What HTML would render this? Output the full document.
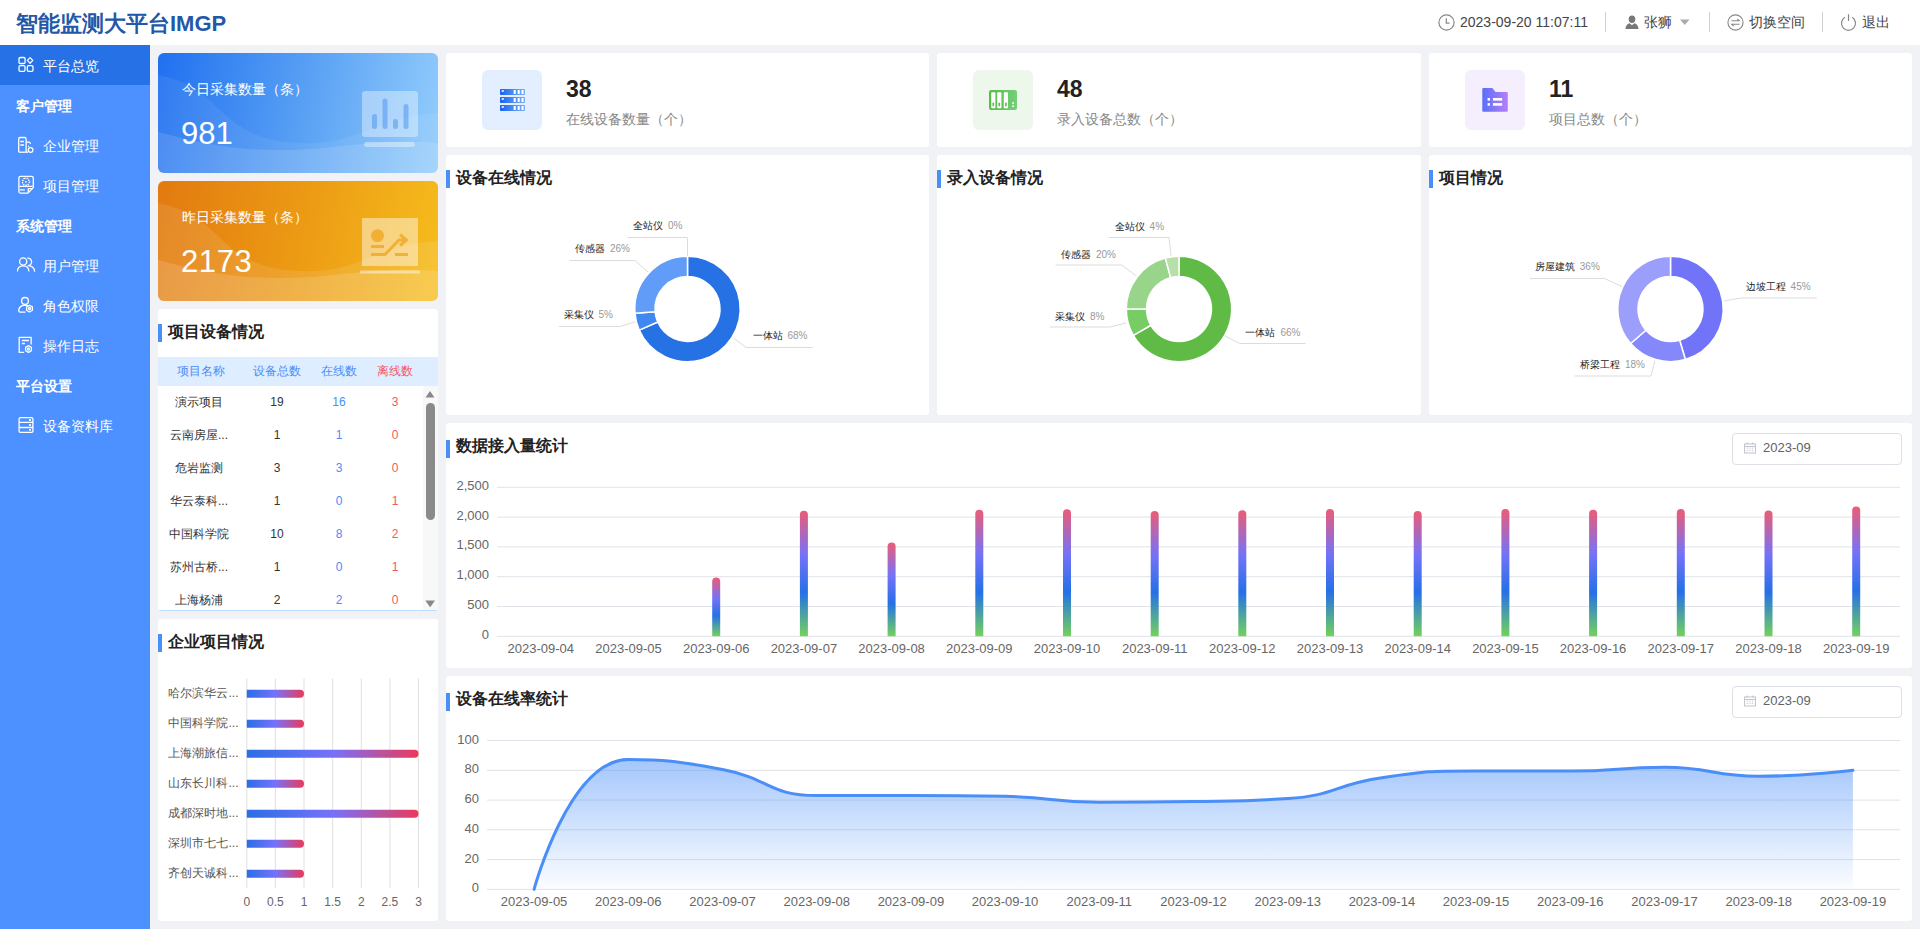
<!DOCTYPE html><html><head><meta charset="utf-8"><title>IMGP</title>
<style>
*{box-sizing:border-box;margin:0;padding:0}
html,body{width:1920px;height:929px;overflow:hidden}
body{background:#f0f2f5;font-family:'Liberation Sans', sans-serif;position:relative;color:#333}
.abs{position:absolute}
.card{position:absolute;background:#fff;border-radius:3px;overflow:hidden}
.ttl{position:absolute;font-size:16px;font-weight:bold;color:#222;line-height:18px;white-space:nowrap}
.bar4{position:absolute;width:4px;height:18px;background:#4a8ef8}
.nav{position:absolute;left:0;width:150px;height:40px;color:#fff;font-size:14px;line-height:40px;white-space:nowrap}
.nav svg{position:absolute;left:17px;top:12px}
.nav span{position:absolute;left:43px;top:0}
.grp{position:absolute;left:16px;color:#fff;font-size:14px;font-weight:bold;line-height:40px;white-space:nowrap}
.hd{position:absolute;top:0;height:45px;line-height:45px;font-size:14px;color:#444;white-space:nowrap}
.sep{position:absolute;top:12px;width:1px;height:20px;background:#d0d0d0}
</style></head><body>

<div class="abs" style="left:0;top:0;width:1920px;height:45px;background:#fff"></div>
<div class="hd" style="left:16px;top:1px;font-size:22px;font-weight:bold;color:#2358a8;letter-spacing:0px">智能监测大平台IMGP</div>
<svg class="abs" style="left:1438px;top:14px" width="17" height="17" viewBox="0 0 17 17"><circle cx="8.5" cy="8.5" r="7.6" fill="none" stroke="#888" stroke-width="1.2"/><path d="M8.3 4.2V9.2H11.6" fill="none" stroke="#888" stroke-width="1.2"/></svg>
<div class="hd" style="left:1460px">2023-09-20 11:07:11</div>
<div class="sep" style="left:1605px"></div>
<svg class="abs" style="left:1625px;top:15px" width="14" height="14" viewBox="0 0 14 14"><ellipse cx="7" cy="4.3" rx="3.3" ry="3.8" fill="#777"/><path d="M0.5 14C0.8 10 3 8.6 4.6 8.3L7 10.2L9.4 8.3C11 8.6 13.2 10 13.5 14Z" fill="#777"/></svg>
<div class="hd" style="left:1644px">张狮</div>
<svg class="abs" style="left:1680px;top:19px" width="10" height="7" viewBox="0 0 10 7"><path d="M0 0.5H9.5L4.75 6Z" fill="#aaa"/></svg>
<div class="sep" style="left:1709px"></div>
<svg class="abs" style="left:1727px;top:14px" width="17" height="17" viewBox="0 0 17 17"><circle cx="8.5" cy="8.5" r="7.6" fill="none" stroke="#888" stroke-width="1.1"/><path d="M4.5 6.8H12.3L10.3 4.8M12.5 10.2H4.7L6.7 12.2" fill="none" stroke="#888" stroke-width="1.1"/></svg>
<div class="hd" style="left:1749px">切换空间</div>
<div class="sep" style="left:1822px"></div>
<svg class="abs" style="left:1840px;top:13px" width="17" height="18" viewBox="0 0 17 18"><path d="M4.9 4.3A7 7 0 1 0 12.1 4.3" fill="none" stroke="#888" stroke-width="1.2"/><path d="M8.5 1.2V8" fill="none" stroke="#888" stroke-width="1.2"/></svg>
<div class="hd" style="left:1862px">退出</div>
<div class="abs" style="left:0;top:45px;width:150px;height:884px;background:#4d90ff"></div>
<div class="abs" style="left:0;top:45px;width:150px;height:40px;background:#2571e5"></div>
<div class="nav" style="top:45px"><svg width="40" height="40" viewBox="0 0 40 40" style="left:0;top:0"><rect x="19" y="12.5" width="6.1" height="6" rx="1.3" fill="none" stroke="#fff" stroke-width="1.3" stroke-linejoin="round"/><path d="M30.1 12.6L32.8 15.4L30.1 18.2L27.4 15.4Z" fill="none" stroke="#fff" stroke-width="1.3" stroke-linejoin="round"/><rect x="19" y="20.6" width="6" height="5.7" rx="1.3" fill="none" stroke="#fff" stroke-width="1.3" stroke-linejoin="round"/><rect x="27.3" y="20.6" width="5.7" height="5.7" rx="1.3" fill="none" stroke="#fff" stroke-width="1.3" stroke-linejoin="round"/></svg><span style="top:1px">平台总览</span></div>
<div class="grp" style="top:86px">客户管理</div>
<div class="nav" style="top:125px"><svg width="40" height="40" viewBox="0 0 40 40" style="left:0;top:0"><path d="M18.7 27V14Q18.7 12.5 20.2 12.5H24.6Q26.1 12.5 26.1 14V27" fill="none" stroke="#fff" stroke-width="1.3" stroke-linejoin="round"/><path d="M20.3 16.5H23.9M20.3 20H23.9" fill="none" stroke="#fff" stroke-width="1.3" stroke-linejoin="round"/><path d="M26.1 17.2H29.6L30.6 19" fill="none" stroke="#fff" stroke-width="1.3" stroke-linejoin="round"/><path d="M18.7 27.2H28" fill="none" stroke="#fff" stroke-width="1.3" stroke-linejoin="round"/><circle cx="30.6" cy="25" r="2.3" fill="none" stroke="#fff" stroke-width="1.3" stroke-linejoin="round"/><circle cx="28.6" cy="21.2" r="0.7" fill="#fff"/></svg><span style="top:1px">企业管理</span></div>
<div class="nav" style="top:165px"><svg width="40" height="40" viewBox="0 0 40 40" style="left:0;top:0"><path d="M28 28.1H20.4Q18.9 28.1 18.9 26.6V12.9Q18.9 11.4 20.4 11.4H31.8Q33.3 11.4 33.3 12.9V22.6L28 28.1" fill="none" stroke="#fff" stroke-width="1.3" stroke-linejoin="round"/><path d="M19.5 21.4H32.6M19.9 24.8H24.9" fill="none" stroke="#fff" stroke-width="1.3" stroke-linejoin="round"/><path d="M28.3 27.5V23.6H32.6" fill="none" stroke="#fff" stroke-width="1.3" stroke-linejoin="round"/><path d="M24 13.4H27.8L29.7 16.8L27.8 20.2H24L22.1 16.8Z" fill="none" stroke="#fff" stroke-width="1.3" stroke-linejoin="round" stroke-dasharray="1.6 0.9"/><circle cx="25.9" cy="16.8" r="0.9" fill="#fff"/></svg><span style="top:1px">项目管理</span></div>
<div class="grp" style="top:206px">系统管理</div>
<div class="nav" style="top:245px"><svg width="40" height="40" viewBox="0 0 40 40" style="left:0;top:0"><circle cx="23.2" cy="16.5" r="3.6" fill="none" stroke="#fff" stroke-width="1.3" stroke-linejoin="round"/><path d="M17.4 26.6Q17.6 20.9 23.2 20.9Q28.7 20.9 28.9 26.6" fill="none" stroke="#fff" stroke-width="1.3" stroke-linejoin="round"/><path d="M27.2 13.1A3.7 3.7 0 1 1 28.4 20.6Q34.4 21.4 34.7 26.6" fill="none" stroke="#fff" stroke-width="1.3" stroke-linejoin="round"/></svg><span style="top:1px">用户管理</span></div>
<div class="nav" style="top:285px"><svg width="40" height="40" viewBox="0 0 40 40" style="left:0;top:0"><circle cx="25" cy="15.9" r="3.4" fill="none" stroke="#fff" stroke-width="1.3" stroke-linejoin="round"/><path d="M28.4 20.9Q27 20.2 25 20.2Q18.9 20.5 18.7 25.8Q18.8 27.1 20.2 27.1H25.6" fill="none" stroke="#fff" stroke-width="1.3" stroke-linejoin="round"/><path d="M29.5 20.2L32.4 21.9V25.3L29.5 27L26.6 25.3V21.9Z" fill="none" stroke="#fff" stroke-width="1.3" stroke-linejoin="round"/><circle cx="29.5" cy="23.6" r="1.1" fill="none" stroke="#fff" stroke-width="1.3" stroke-linejoin="round"/></svg><span style="top:1px">角色权限</span></div>
<div class="nav" style="top:325px"><svg width="40" height="40" viewBox="0 0 40 40" style="left:0;top:0"><path d="M24.1 27.4H19.2V12.3H31.1V19.4" fill="none" stroke="#fff" stroke-width="1.3" stroke-linejoin="round"/><path d="M21.8 15.5H29M21.8 18.5H24.9" fill="none" stroke="#fff" stroke-width="1.3" stroke-linejoin="round"/><path d="M28.5 20.6L31.4 22.3V25.7L28.5 27.4L25.6 25.7V22.3Z" fill="none" stroke="#fff" stroke-width="1.3" stroke-linejoin="round"/><circle cx="28.5" cy="24" r="1.1" fill="none" stroke="#fff" stroke-width="1.3" stroke-linejoin="round"/></svg><span style="top:1px">操作日志</span></div>
<div class="grp" style="top:366px">平台设置</div>
<div class="nav" style="top:405px"><svg width="40" height="40" viewBox="0 0 40 40" style="left:0;top:0"><rect x="19.1" y="12.7" width="13.8" height="14.6" rx="1.2" fill="none" stroke="#fff" stroke-width="1.3" stroke-linejoin="round"/><path d="M19.1 17.4H32.9M19.1 22.5H32.9" fill="none" stroke="#fff" stroke-width="1.3" stroke-linejoin="round"/><rect x="29" y="14.1" width="1.9" height="1.8" fill="#fff"/><rect x="29" y="19.1" width="1.9" height="1.8" fill="#fff"/><rect x="29" y="24" width="1.9" height="1.8" fill="#fff"/></svg><span style="top:1px">设备资料库</span></div>
<div class="abs" style="left:158px;top:53px;width:280px;height:120px;border-radius:6px;overflow:hidden;background:linear-gradient(100deg,#2070f0 0%,#579ff4 50%,#93cdfc 100%)">
<svg class="abs" style="left:0;top:0" width="280" height="120" viewBox="0 0 280 120"><path d="M0 22C30 28 45 40 60 55C85 80 110 92 160 90C200 88 230 62 280 60V120H0Z" fill="rgba(255,255,255,0.07)"/><path d="M0 79C40 90 80 98 130 97C180 96 220 85 280 90V120H0Z" fill="rgba(255,255,255,0.12)"/></svg>
<div class="abs" style="left:24px;top:26px;font-size:14px;color:#fff;line-height:20px;white-space:nowrap">今日采集数量（条）</div>
<div class="abs" style="left:23px;top:63px;font-size:31px;color:#fff;line-height:36px;white-space:nowrap;letter-spacing:0px">981</div>
<svg class="abs" style="left:202px;top:36px" width="60" height="60" viewBox="0 0 60 60"><rect x="2" y="2" width="56" height="46" rx="3" fill="rgba(255,255,255,0.38)"/><rect x="4" y="53" width="51" height="5" rx="2.5" fill="rgba(255,255,255,0.38)"/><rect x="12" y="25" width="5" height="15" rx="2.5" fill="rgba(80,150,240,0.55)"/><rect x="22.5" y="9.5" width="5" height="30.5" rx="2.5" fill="rgba(80,150,240,0.55)"/><rect x="33" y="30" width="5" height="10" rx="2.5" fill="rgba(80,150,240,0.55)"/><rect x="43.5" y="15" width="5" height="25" rx="2.5" fill="rgba(80,150,240,0.55)"/></svg>
</div>
<div class="abs" style="left:158px;top:181px;width:280px;height:120px;border-radius:6px;overflow:hidden;background:linear-gradient(100deg,#e27a10 0%,#ec9a14 50%,#f6bd1d 100%)">
<svg class="abs" style="left:0;top:0" width="280" height="120" viewBox="0 0 280 120"><path d="M0 22C30 28 45 40 60 55C85 80 110 92 160 90C200 88 230 62 280 60V120H0Z" fill="rgba(255,255,255,0.10)"/><path d="M0 79C40 90 80 98 130 97C180 96 220 85 280 90V120H0Z" fill="rgba(255,255,255,0.14)"/></svg>
<div class="abs" style="left:24px;top:26px;font-size:14px;color:#fff;line-height:20px;white-space:nowrap">昨日采集数量（条）</div>
<div class="abs" style="left:23px;top:63px;font-size:31px;color:#fff;line-height:36px;white-space:nowrap;letter-spacing:0.6px">2173</div>
<svg class="abs" style="left:200px;top:35px" width="64" height="64" viewBox="0 0 64 64"><rect x="4" y="2" width="56" height="48" fill="rgba(255,255,255,0.45)"/><rect x="2" y="54.5" width="60" height="3" fill="rgba(255,255,255,0.45)"/><circle cx="19.5" cy="19.7" r="6.5" fill="rgba(240,170,40,0.85)"/><rect x="13" y="29" width="13" height="3" fill="rgba(240,170,40,0.85)"/><rect x="37" y="37" width="13" height="3" fill="rgba(240,170,40,0.85)"/><path d="M13 38.5H27L41 24H46" fill="none" stroke="rgba(240,170,40,0.85)" stroke-width="3"/><path d="M42 18.5L48.5 24L42 29.5" fill="none" stroke="rgba(240,170,40,0.85)" stroke-width="3"/></svg>
</div>
<div class="card" style="left:158px;top:309px;width:280px;height:302px">
<div class="bar4" style="left:0;top:15px"></div>
<div class="ttl" style="left:10px;top:14px">项目设备情况</div>
<div class="abs" style="left:0;top:48px;width:280px;height:29px;background:#deedff"></div>
<div class="abs" style="left:2.5px;top:48px;width:80px;text-align:center;font-size:12px;line-height:29px;color:#4a8ef8">项目名称</div>
<div class="abs" style="left:79px;top:48px;width:80px;text-align:center;font-size:12px;line-height:29px;color:#4a8ef8">设备总数</div>
<div class="abs" style="left:141px;top:48px;width:80px;text-align:center;font-size:12px;line-height:29px;color:#4a8ef8">在线数</div>
<div class="abs" style="left:197px;top:48px;width:80px;text-align:center;font-size:12px;line-height:29px;color:#f25a5f">离线数</div>
<div class="abs" style="left:-4px;top:78px;width:90px;text-align:center;font-size:12px;line-height:31px;color:#333">演示项目</div>
<div class="abs" style="left:74px;top:78px;width:90px;text-align:center;font-size:12px;line-height:31px;color:#333">19</div>
<div class="abs" style="left:136px;top:78px;width:90px;text-align:center;font-size:12px;line-height:31px;color:#4a8ef8">16</div>
<div class="abs" style="left:192px;top:78px;width:90px;text-align:center;font-size:12px;line-height:31px;color:#f25a5f">3</div>
<div class="abs" style="left:-4px;top:111px;width:90px;text-align:center;font-size:12px;line-height:31px;color:#333">云南房屋...</div>
<div class="abs" style="left:74px;top:111px;width:90px;text-align:center;font-size:12px;line-height:31px;color:#333">1</div>
<div class="abs" style="left:136px;top:111px;width:90px;text-align:center;font-size:12px;line-height:31px;color:#4a8ef8">1</div>
<div class="abs" style="left:192px;top:111px;width:90px;text-align:center;font-size:12px;line-height:31px;color:#f25a5f">0</div>
<div class="abs" style="left:-4px;top:144px;width:90px;text-align:center;font-size:12px;line-height:31px;color:#333">危岩监测</div>
<div class="abs" style="left:74px;top:144px;width:90px;text-align:center;font-size:12px;line-height:31px;color:#333">3</div>
<div class="abs" style="left:136px;top:144px;width:90px;text-align:center;font-size:12px;line-height:31px;color:#4a8ef8">3</div>
<div class="abs" style="left:192px;top:144px;width:90px;text-align:center;font-size:12px;line-height:31px;color:#f25a5f">0</div>
<div class="abs" style="left:-4px;top:177px;width:90px;text-align:center;font-size:12px;line-height:31px;color:#333">华云泰科...</div>
<div class="abs" style="left:74px;top:177px;width:90px;text-align:center;font-size:12px;line-height:31px;color:#333">1</div>
<div class="abs" style="left:136px;top:177px;width:90px;text-align:center;font-size:12px;line-height:31px;color:#4a8ef8">0</div>
<div class="abs" style="left:192px;top:177px;width:90px;text-align:center;font-size:12px;line-height:31px;color:#f25a5f">1</div>
<div class="abs" style="left:-4px;top:210px;width:90px;text-align:center;font-size:12px;line-height:31px;color:#333">中国科学院</div>
<div class="abs" style="left:74px;top:210px;width:90px;text-align:center;font-size:12px;line-height:31px;color:#333">10</div>
<div class="abs" style="left:136px;top:210px;width:90px;text-align:center;font-size:12px;line-height:31px;color:#4a8ef8">8</div>
<div class="abs" style="left:192px;top:210px;width:90px;text-align:center;font-size:12px;line-height:31px;color:#f25a5f">2</div>
<div class="abs" style="left:-4px;top:243px;width:90px;text-align:center;font-size:12px;line-height:31px;color:#333">苏州古桥...</div>
<div class="abs" style="left:74px;top:243px;width:90px;text-align:center;font-size:12px;line-height:31px;color:#333">1</div>
<div class="abs" style="left:136px;top:243px;width:90px;text-align:center;font-size:12px;line-height:31px;color:#4a8ef8">0</div>
<div class="abs" style="left:192px;top:243px;width:90px;text-align:center;font-size:12px;line-height:31px;color:#f25a5f">1</div>
<div class="abs" style="left:-4px;top:276px;width:90px;text-align:center;font-size:12px;line-height:31px;color:#333">上海杨浦</div>
<div class="abs" style="left:74px;top:276px;width:90px;text-align:center;font-size:12px;line-height:31px;color:#333">2</div>
<div class="abs" style="left:136px;top:276px;width:90px;text-align:center;font-size:12px;line-height:31px;color:#4a8ef8">2</div>
<div class="abs" style="left:192px;top:276px;width:90px;text-align:center;font-size:12px;line-height:31px;color:#f25a5f">0</div>
<div class="abs" style="left:265px;top:77px;width:15px;height:225px;background:#f8f8f8"></div>
<svg class="abs" style="left:267px;top:81px" width="10" height="8"><path d="M0.5 7.5H9.5L5 1Z" fill="#888"/></svg>
<div class="abs" style="left:268px;top:94px;width:9px;height:117px;border-radius:4.5px;background:#8a8a8a"></div>
<svg class="abs" style="left:267px;top:291px" width="11" height="8"><path d="M0.3 0.5H10L5.15 7.3Z" fill="#888"/></svg>
<div class="abs" style="left:0;top:301px;width:280px;height:1px;background:#bcdcff"></div>
</div>
<div class="card" style="left:158px;top:619px;width:280px;height:302px">
<div class="bar4" style="left:0;top:15px"></div>
<div class="ttl" style="left:10px;top:14px">企业项目情况</div>
<svg class="abs" style="left:0;top:0" width="280" height="302" viewBox="0 0 280 302"><defs><linearGradient id="hb" x1="0" y1="0" x2="1" y2="0"><stop offset="0" stop-color="#2a6fe6"/><stop offset="0.5" stop-color="#7771fa"/><stop offset="1" stop-color="#ea3a5a"/></linearGradient><linearGradient id="hb3" x1="0" y1="0" x2="1" y2="0"><stop offset="0" stop-color="#2a6fe6"/><stop offset="0.5" stop-color="#7771fa"/><stop offset="1" stop-color="#ea3a5a"/></linearGradient></defs><line x1="88.8" y1="59.5" x2="88.8" y2="269" stroke="#e0e0e0" stroke-width="1"/><text x="88.8" y="286.5" font-size="12" fill="#666" text-anchor="middle" font-family="Liberation Sans, sans-serif">0</text><line x1="117.4" y1="59.5" x2="117.4" y2="269" stroke="#e0e0e0" stroke-width="1"/><text x="117.4" y="286.5" font-size="12" fill="#666" text-anchor="middle" font-family="Liberation Sans, sans-serif">0.5</text><line x1="146.0" y1="59.5" x2="146.0" y2="269" stroke="#e0e0e0" stroke-width="1"/><text x="146.0" y="286.5" font-size="12" fill="#666" text-anchor="middle" font-family="Liberation Sans, sans-serif">1</text><line x1="174.6" y1="59.5" x2="174.6" y2="269" stroke="#e0e0e0" stroke-width="1"/><text x="174.6" y="286.5" font-size="12" fill="#666" text-anchor="middle" font-family="Liberation Sans, sans-serif">1.5</text><line x1="203.3" y1="59.5" x2="203.3" y2="269" stroke="#e0e0e0" stroke-width="1"/><text x="203.3" y="286.5" font-size="12" fill="#666" text-anchor="middle" font-family="Liberation Sans, sans-serif">2</text><line x1="231.9" y1="59.5" x2="231.9" y2="269" stroke="#e0e0e0" stroke-width="1"/><text x="231.9" y="286.5" font-size="12" fill="#666" text-anchor="middle" font-family="Liberation Sans, sans-serif">2.5</text><line x1="260.5" y1="59.5" x2="260.5" y2="269" stroke="#e0e0e0" stroke-width="1"/><text x="260.5" y="286.5" font-size="12" fill="#666" text-anchor="middle" font-family="Liberation Sans, sans-serif">3</text><text x="80.5" y="78.0" font-size="12" fill="#555" text-anchor="end" font-family="Liberation Sans, sans-serif">哈尔滨华云...</text><path d="M88.8 70.8H142.0A4 4 0 0 1 142.0 78.8H88.8Z" fill="url(#hb)"/><text x="80.5" y="108.0" font-size="12" fill="#555" text-anchor="end" font-family="Liberation Sans, sans-serif">中国科学院...</text><path d="M88.8 100.8H142.0A4 4 0 0 1 142.0 108.8H88.8Z" fill="url(#hb)"/><text x="80.5" y="138.0" font-size="12" fill="#555" text-anchor="end" font-family="Liberation Sans, sans-serif">上海潮旅信...</text><path d="M88.8 130.8H256.5A4 4 0 0 1 256.5 138.8H88.8Z" fill="url(#hb)"/><text x="80.5" y="168.0" font-size="12" fill="#555" text-anchor="end" font-family="Liberation Sans, sans-serif">山东长川科...</text><path d="M88.8 160.8H142.0A4 4 0 0 1 142.0 168.8H88.8Z" fill="url(#hb)"/><text x="80.5" y="198.0" font-size="12" fill="#555" text-anchor="end" font-family="Liberation Sans, sans-serif">成都深时地...</text><path d="M88.8 190.8H256.5A4 4 0 0 1 256.5 198.8H88.8Z" fill="url(#hb)"/><text x="80.5" y="228.0" font-size="12" fill="#555" text-anchor="end" font-family="Liberation Sans, sans-serif">深圳市七七...</text><path d="M88.8 220.8H142.0A4 4 0 0 1 142.0 228.8H88.8Z" fill="url(#hb)"/><text x="80.5" y="258.0" font-size="12" fill="#555" text-anchor="end" font-family="Liberation Sans, sans-serif">齐创天诚科...</text><path d="M88.8 250.8H142.0A4 4 0 0 1 142.0 258.8H88.8Z" fill="url(#hb)"/></svg>
</div>
<div class="card" style="left:446px;top:53px;width:483px;height:94px">
<div class="abs" style="left:36px;top:17px;width:60px;height:60px;border-radius:6px;background:#e3eefe"></div>
<svg class="abs" style="left:36px;top:17px" width="60" height="60" viewBox="0 0 60 60"><defs><linearGradient id="sg1" x1="0" y1="0" x2="1" y2="0"><stop offset="0" stop-color="#1a62ee"/><stop offset="1" stop-color="#78b2f9"/></linearGradient></defs><rect x="18" y="19" width="25" height="6" rx="0.8" fill="url(#sg1)"/><rect x="19.7" y="20.2" width="2.1" height="1.6" fill="#fff"/><rect x="31.7" y="20" width="2" height="4" fill="#fff"/><rect x="35.7" y="20" width="2" height="4" fill="#fff"/><rect x="39.5" y="20" width="2" height="4" fill="#fff"/><rect x="18" y="27" width="25" height="6" rx="0.8" fill="url(#sg1)"/><rect x="19.7" y="28.2" width="2.1" height="1.6" fill="#fff"/><rect x="31.7" y="28" width="2" height="4" fill="#fff"/><rect x="35.7" y="28" width="2" height="4" fill="#fff"/><rect x="39.5" y="28" width="2" height="4" fill="#fff"/><rect x="18" y="35" width="25" height="6" rx="0.8" fill="url(#sg1)"/><rect x="19.7" y="36.2" width="2.1" height="1.6" fill="#fff"/><rect x="31.7" y="36" width="2" height="4" fill="#fff"/><rect x="35.7" y="36" width="2" height="4" fill="#fff"/><rect x="39.5" y="36" width="2" height="4" fill="#fff"/></svg>
<div class="abs" style="left:120px;top:23px;font-size:23px;font-weight:bold;color:#222;line-height:26px">38</div>
<div class="abs" style="left:120px;top:56px;font-size:14px;color:#888;line-height:20px;white-space:nowrap">在线设备数量（个）</div>
</div>
<div class="card" style="left:937px;top:53px;width:484px;height:94px">
<div class="abs" style="left:36px;top:17px;width:60px;height:60px;border-radius:6px;background:#edf7ec"></div>
<svg class="abs" style="left:36px;top:17px" width="60" height="60" viewBox="0 0 60 60"><defs><linearGradient id="sg2" x1="0" y1="0" x2="1" y2="0"><stop offset="0" stop-color="#56bd47"/><stop offset="1" stop-color="#74cf7b"/></linearGradient></defs><rect x="16" y="20" width="28" height="20" rx="2.2" fill="url(#sg2)"/><rect x="18.2" y="22.2" width="4.2" height="16" rx="0.8" fill="#fff"/><rect x="19.5" y="32.5" width="1.6" height="4" rx="0.8" fill="#5cbf50"/><rect x="24.2" y="22.2" width="4.2" height="16" rx="0.8" fill="#fff"/><rect x="25.5" y="32.5" width="1.6" height="4" rx="0.8" fill="#5cbf50"/><rect x="30.8" y="22.2" width="4.2" height="16" rx="0.8" fill="#fff"/><rect x="32.1" y="32.5" width="1.6" height="4" rx="0.8" fill="#5cbf50"/><rect x="39.2" y="32.3" width="1.8" height="1.5" fill="#fff"/><rect x="39.2" y="35.5" width="1.8" height="1.5" fill="#fff"/></svg>
<div class="abs" style="left:120px;top:23px;font-size:23px;font-weight:bold;color:#222;line-height:26px">48</div>
<div class="abs" style="left:120px;top:56px;font-size:14px;color:#888;line-height:20px;white-space:nowrap">录入设备总数（个）</div>
</div>
<div class="card" style="left:1429px;top:53px;width:483px;height:94px">
<div class="abs" style="left:36px;top:17px;width:60px;height:60px;border-radius:6px;background:#f5effd"></div>
<svg class="abs" style="left:36px;top:17px" width="60" height="60" viewBox="0 0 60 60"><defs><linearGradient id="sg3" x1="0" y1="0" x2="1" y2="0"><stop offset="0" stop-color="#5870f8"/><stop offset="1" stop-color="#b87ef8"/></linearGradient></defs><path d="M18.5 18H27.4L30.5 22.1H41.8Q42.8 22.1 42.8 23.1V40.7Q42.8 41.7 41.8 41.7H18.3Q17.3 41.7 17.3 40.7V19Q17.3 18 18.5 18Z" fill="url(#sg3)"/><rect x="22.6" y="28" width="2.4" height="2.6" fill="#fff"/><rect x="22.6" y="33.1" width="2.4" height="2.6" fill="#fff"/><rect x="27.9" y="28" width="9.3" height="2.6" fill="#fff"/><rect x="27.9" y="33.1" width="9.3" height="2.6" fill="#fff"/></svg>
<div class="abs" style="left:120px;top:23px;font-size:23px;font-weight:bold;color:#222;line-height:26px">11</div>
<div class="abs" style="left:120px;top:56px;font-size:14px;color:#888;line-height:20px;white-space:nowrap">项目总数（个）</div>
</div>
<div class="card" style="left:446px;top:155px;width:483px;height:260px">
<div class="bar4" style="left:0;top:15px"></div>
<div class="ttl" style="left:10px;top:14px">设备在线情况</div>
</div>
<svg class="abs" style="left:446px;top:155px" width="483" height="260" viewBox="446 155 483 260"><path d="M687.50 256.30A52.7 52.7 0 1 1 639.24 330.17L657.74 322.06A32.5 32.5 0 1 0 687.50 276.50Z" fill="#2671e3" stroke="#fff" stroke-width="1.5" stroke-linejoin="round"/><path d="M639.24 330.17A52.7 52.7 0 0 1 634.98 313.35L655.11 311.68A32.5 32.5 0 0 0 657.74 322.06Z" fill="#3f87f1" stroke="#fff" stroke-width="1.5" stroke-linejoin="round"/><path d="M634.98 313.35A52.7 52.7 0 0 1 687.50 256.30L687.50 276.50A32.5 32.5 0 0 0 655.11 311.68Z" fill="#609cf8" stroke="#fff" stroke-width="1.5" stroke-linejoin="round"/><polyline points="687.5,256 687.5,237.5 627.5,237.5" fill="none" stroke="#dcdcdc" stroke-width="1"/><text x="633" y="229.0" font-size="10" font-family="Liberation Sans, sans-serif"><tspan fill="#222">全站仪</tspan><tspan fill="#999" dx="5">0%</tspan></text><polyline points="648,272 635,260.5 569.5,260.5" fill="none" stroke="#dcdcdc" stroke-width="1"/><text x="575" y="252.0" font-size="10" font-family="Liberation Sans, sans-serif"><tspan fill="#222">传感器</tspan><tspan fill="#999" dx="5">26%</tspan></text><polyline points="635,322 620,326.5 559,326.5" fill="none" stroke="#dcdcdc" stroke-width="1"/><text x="563.5" y="317.5" font-size="10" font-family="Liberation Sans, sans-serif"><tspan fill="#222">采集仪</tspan><tspan fill="#999" dx="5">5%</tspan></text><polyline points="733.6,338 746,347.5 812.7,347.5" fill="none" stroke="#dcdcdc" stroke-width="1"/><text x="752.5" y="338.5" font-size="10" font-family="Liberation Sans, sans-serif"><tspan fill="#222">一体站</tspan><tspan fill="#999" dx="5">68%</tspan></text></svg>
<div class="card" style="left:937px;top:155px;width:484px;height:260px">
<div class="bar4" style="left:0;top:15px"></div>
<div class="ttl" style="left:10px;top:14px">录入设备情况</div>
</div>
<svg class="abs" style="left:937px;top:155px" width="484" height="260" viewBox="937 155 484 260"><path d="M1179.00 256.30A52.7 52.7 0 1 1 1133.36 335.35L1150.85 325.25A32.5 32.5 0 1 0 1179.00 276.50Z" fill="#5fba46" stroke="#fff" stroke-width="1.5" stroke-linejoin="round"/><path d="M1133.36 335.35A52.7 52.7 0 0 1 1126.30 309.00L1146.50 309.00A32.5 32.5 0 0 0 1150.85 325.25Z" fill="#77cc63" stroke="#fff" stroke-width="1.5" stroke-linejoin="round"/><path d="M1126.30 309.00A52.7 52.7 0 0 1 1165.36 258.10L1170.59 277.61A32.5 32.5 0 0 0 1146.50 309.00Z" fill="#98d58a" stroke="#fff" stroke-width="1.5" stroke-linejoin="round"/><path d="M1165.36 258.10A52.7 52.7 0 0 1 1179.00 256.30L1179.00 276.50A32.5 32.5 0 0 0 1170.59 277.61Z" fill="#b8dfa9" stroke="#fff" stroke-width="1.5" stroke-linejoin="round"/><polyline points="1171,256 1169,237.5 1108.8,237.5" fill="none" stroke="#dcdcdc" stroke-width="1"/><text x="1114.6" y="230.0" font-size="10" font-family="Liberation Sans, sans-serif"><tspan fill="#222">全站仪</tspan><tspan fill="#999" dx="5">4%</tspan></text><polyline points="1135.8,275.6 1121.9,265 1055.6,265" fill="none" stroke="#dcdcdc" stroke-width="1"/><text x="1061" y="257.5" font-size="10" font-family="Liberation Sans, sans-serif"><tspan fill="#222">传感器</tspan><tspan fill="#999" dx="5">20%</tspan></text><polyline points="1126,323 1110,327 1049.8,327" fill="none" stroke="#dcdcdc" stroke-width="1"/><text x="1055" y="319.5" font-size="10" font-family="Liberation Sans, sans-serif"><tspan fill="#222">采集仪</tspan><tspan fill="#999" dx="5">8%</tspan></text><polyline points="1225,336 1239.6,343.5 1305.6,343.5" fill="none" stroke="#dcdcdc" stroke-width="1"/><text x="1245.4" y="336.0" font-size="10" font-family="Liberation Sans, sans-serif"><tspan fill="#222">一体站</tspan><tspan fill="#999" dx="5">66%</tspan></text></svg>
<div class="card" style="left:1429px;top:155px;width:483px;height:260px">
<div class="bar4" style="left:0;top:15px"></div>
<div class="ttl" style="left:10px;top:14px">项目情况</div>
</div>
<svg class="abs" style="left:1429px;top:155px" width="483" height="260" viewBox="1429 155 483 260"><path d="M1670.50 256.30A52.7 52.7 0 0 1 1685.35 359.57L1679.66 340.18A32.5 32.5 0 0 0 1670.50 276.50Z" fill="#7174f8" stroke="#fff" stroke-width="1.5" stroke-linejoin="round"/><path d="M1685.35 359.57A52.7 52.7 0 0 1 1630.67 343.51L1645.94 330.28A32.5 32.5 0 0 0 1679.66 340.18Z" fill="#8588fa" stroke="#fff" stroke-width="1.5" stroke-linejoin="round"/><path d="M1630.67 343.51A52.7 52.7 0 0 1 1670.50 256.30L1670.50 276.50A32.5 32.5 0 0 0 1645.94 330.28Z" fill="#9c9efc" stroke="#fff" stroke-width="1.5" stroke-linejoin="round"/><polyline points="1723.8,301 1741,298 1816.8,298" fill="none" stroke="#dcdcdc" stroke-width="1"/><text x="1745.6" y="289.5" font-size="10" font-family="Liberation Sans, sans-serif"><tspan fill="#222">边坡工程</tspan><tspan fill="#999" dx="5">45%</tspan></text><polyline points="1654.9,360.8 1651,376 1574.6,376" fill="none" stroke="#dcdcdc" stroke-width="1"/><text x="1580" y="367.5" font-size="10" font-family="Liberation Sans, sans-serif"><tspan fill="#222">桥梁工程</tspan><tspan fill="#999" dx="5">18%</tspan></text><polyline points="1622,286.6 1604.6,278.5 1530,278.5" fill="none" stroke="#dcdcdc" stroke-width="1"/><text x="1534.8" y="270.0" font-size="10" font-family="Liberation Sans, sans-serif"><tspan fill="#222">房屋建筑</tspan><tspan fill="#999" dx="5">36%</tspan></text></svg>
<div class="card" style="left:446px;top:423px;width:1466px;height:245px">
<div class="bar4" style="left:0;top:17px"></div>
<div class="ttl" style="left:10px;top:14px">数据接入量统计</div>
</div>
<div class="abs" style="left:1732px;top:433px;width:170px;height:32px;border:1px solid #dcdfe6;border-radius:4px;background:#fff"></div>
<svg class="abs" style="left:1744px;top:442px" width="12" height="12" viewBox="0 0 13 12"><rect x="0.6" y="1.6" width="11.8" height="9.8" fill="none" stroke="#c0c4cc" stroke-width="1.1"/><path d="M0.6 4.3H12.4M3.5 0V2.5M9.5 0V2.5" stroke="#c0c4cc" stroke-width="1.1"/><path d="M3 6.2H4.4M5.8 6.2H7.2M8.6 6.2H10M3 8.6H4.4M5.8 8.6H7.2M8.6 8.6H10" stroke="#c0c4cc" stroke-width="1"/></svg>
<div class="abs" style="left:1763px;top:432px;font-size:13px;line-height:31px;color:#606266">2023-09</div>
<svg class="abs" style="left:446px;top:423px" width="1466" height="245" viewBox="446 423 1466 245"><defs><linearGradient id="vb" x1="0" y1="0" x2="0" y2="1"><stop offset="0" stop-color="#ec5c74"/><stop offset="0.35" stop-color="#7672f8"/><stop offset="0.65" stop-color="#2570e8"/><stop offset="1" stop-color="#74d25a"/></linearGradient></defs><line x1="497" y1="636.3" x2="1900" y2="636.3" stroke="#e0e3ea" stroke-width="1"/><text x="489" y="638.8" font-size="13" fill="#666" text-anchor="end" font-family="Liberation Sans, sans-serif">0</text><line x1="497" y1="606.5" x2="1900" y2="606.5" stroke="#e0e3ea" stroke-width="1"/><text x="489" y="609.0" font-size="13" fill="#666" text-anchor="end" font-family="Liberation Sans, sans-serif">500</text><line x1="497" y1="576.7" x2="1900" y2="576.7" stroke="#e0e3ea" stroke-width="1"/><text x="489" y="579.2" font-size="13" fill="#666" text-anchor="end" font-family="Liberation Sans, sans-serif">1,000</text><line x1="497" y1="546.9" x2="1900" y2="546.9" stroke="#e0e3ea" stroke-width="1"/><text x="489" y="549.4" font-size="13" fill="#666" text-anchor="end" font-family="Liberation Sans, sans-serif">1,500</text><line x1="497" y1="517.1" x2="1900" y2="517.1" stroke="#e0e3ea" stroke-width="1"/><text x="489" y="519.6" font-size="13" fill="#666" text-anchor="end" font-family="Liberation Sans, sans-serif">2,000</text><line x1="497" y1="487.3" x2="1900" y2="487.3" stroke="#e0e3ea" stroke-width="1"/><text x="489" y="489.8" font-size="13" fill="#666" text-anchor="end" font-family="Liberation Sans, sans-serif">2,500</text><text x="540.8" y="652.5" font-size="13" fill="#666" text-anchor="middle" font-family="Liberation Sans, sans-serif">2023-09-04</text><text x="628.5" y="652.5" font-size="13" fill="#666" text-anchor="middle" font-family="Liberation Sans, sans-serif">2023-09-05</text><text x="716.2" y="652.5" font-size="13" fill="#666" text-anchor="middle" font-family="Liberation Sans, sans-serif">2023-09-06</text><path d="M712.2 636.3V581.6A4 4 0 0 1 720.2 581.6V636.3Z" fill="url(#vb)"/><text x="803.9" y="652.5" font-size="13" fill="#666" text-anchor="middle" font-family="Liberation Sans, sans-serif">2023-09-07</text><path d="M799.9 636.3V514.8A4 4 0 0 1 807.9 514.8V636.3Z" fill="url(#vb)"/><text x="891.6" y="652.5" font-size="13" fill="#666" text-anchor="middle" font-family="Liberation Sans, sans-serif">2023-09-08</text><path d="M887.6 636.3V546.4A4 4 0 0 1 895.6 546.4V636.3Z" fill="url(#vb)"/><text x="979.3" y="652.5" font-size="13" fill="#666" text-anchor="middle" font-family="Liberation Sans, sans-serif">2023-09-09</text><path d="M975.3 636.3V513.8A4 4 0 0 1 983.3 513.8V636.3Z" fill="url(#vb)"/><text x="1067.0" y="652.5" font-size="13" fill="#666" text-anchor="middle" font-family="Liberation Sans, sans-serif">2023-09-10</text><path d="M1063.0 636.3V513.3A4 4 0 0 1 1071.0 513.3V636.3Z" fill="url(#vb)"/><text x="1154.7" y="652.5" font-size="13" fill="#666" text-anchor="middle" font-family="Liberation Sans, sans-serif">2023-09-11</text><path d="M1150.7 636.3V514.9A4 4 0 0 1 1158.7 514.9V636.3Z" fill="url(#vb)"/><text x="1242.3" y="652.5" font-size="13" fill="#666" text-anchor="middle" font-family="Liberation Sans, sans-serif">2023-09-12</text><path d="M1238.3 636.3V514.2A4 4 0 0 1 1246.3 514.2V636.3Z" fill="url(#vb)"/><text x="1330.0" y="652.5" font-size="13" fill="#666" text-anchor="middle" font-family="Liberation Sans, sans-serif">2023-09-13</text><path d="M1326.0 636.3V512.9A4 4 0 0 1 1334.0 512.9V636.3Z" fill="url(#vb)"/><text x="1417.7" y="652.5" font-size="13" fill="#666" text-anchor="middle" font-family="Liberation Sans, sans-serif">2023-09-14</text><path d="M1413.7 636.3V515.0A4 4 0 0 1 1421.7 515.0V636.3Z" fill="url(#vb)"/><text x="1505.4" y="652.5" font-size="13" fill="#666" text-anchor="middle" font-family="Liberation Sans, sans-serif">2023-09-15</text><path d="M1501.4 636.3V512.9A4 4 0 0 1 1509.4 512.9V636.3Z" fill="url(#vb)"/><text x="1593.1" y="652.5" font-size="13" fill="#666" text-anchor="middle" font-family="Liberation Sans, sans-serif">2023-09-16</text><path d="M1589.1 636.3V513.8A4 4 0 0 1 1597.1 513.8V636.3Z" fill="url(#vb)"/><text x="1680.8" y="652.5" font-size="13" fill="#666" text-anchor="middle" font-family="Liberation Sans, sans-serif">2023-09-17</text><path d="M1676.8 636.3V512.9A4 4 0 0 1 1684.8 512.9V636.3Z" fill="url(#vb)"/><text x="1768.5" y="652.5" font-size="13" fill="#666" text-anchor="middle" font-family="Liberation Sans, sans-serif">2023-09-18</text><path d="M1764.5 636.3V514.4A4 4 0 0 1 1772.5 514.4V636.3Z" fill="url(#vb)"/><text x="1856.2" y="652.5" font-size="13" fill="#666" text-anchor="middle" font-family="Liberation Sans, sans-serif">2023-09-19</text><path d="M1852.2 636.3V510.6A4 4 0 0 1 1860.2 510.6V636.3Z" fill="url(#vb)"/></svg>
<div class="card" style="left:446px;top:676px;width:1466px;height:245px">
<div class="bar4" style="left:0;top:17px"></div>
<div class="ttl" style="left:10px;top:14px">设备在线率统计</div>
</div>
<div class="abs" style="left:1732px;top:686px;width:170px;height:32px;border:1px solid #dcdfe6;border-radius:4px;background:#fff"></div>
<svg class="abs" style="left:1744px;top:695px" width="12" height="12" viewBox="0 0 13 12"><rect x="0.6" y="1.6" width="11.8" height="9.8" fill="none" stroke="#c0c4cc" stroke-width="1.1"/><path d="M0.6 4.3H12.4M3.5 0V2.5M9.5 0V2.5" stroke="#c0c4cc" stroke-width="1.1"/><path d="M3 6.2H4.4M5.8 6.2H7.2M8.6 6.2H10M3 8.6H4.4M5.8 8.6H7.2M8.6 8.6H10" stroke="#c0c4cc" stroke-width="1"/></svg>
<div class="abs" style="left:1763px;top:685px;font-size:13px;line-height:31px;color:#606266">2023-09</div>
<svg class="abs" style="left:446px;top:676px" width="1466" height="245" viewBox="446 676 1466 245"><defs><linearGradient id="ar" x1="0" y1="0" x2="0" y2="1"><stop offset="0" stop-color="#4a8ef8" stop-opacity="0.5"/><stop offset="1" stop-color="#4a8ef8" stop-opacity="0.02"/></linearGradient></defs><line x1="487" y1="889.4" x2="1900" y2="889.4" stroke="#e0e3ea" stroke-width="1"/><text x="479" y="892.4" font-size="13" fill="#666" text-anchor="end" font-family="Liberation Sans, sans-serif">0</text><line x1="487" y1="859.6" x2="1900" y2="859.6" stroke="#e0e3ea" stroke-width="1"/><text x="479" y="862.6" font-size="13" fill="#666" text-anchor="end" font-family="Liberation Sans, sans-serif">20</text><line x1="487" y1="829.8" x2="1900" y2="829.8" stroke="#e0e3ea" stroke-width="1"/><text x="479" y="832.8" font-size="13" fill="#666" text-anchor="end" font-family="Liberation Sans, sans-serif">40</text><line x1="487" y1="800.1" x2="1900" y2="800.1" stroke="#e0e3ea" stroke-width="1"/><text x="479" y="803.1" font-size="13" fill="#666" text-anchor="end" font-family="Liberation Sans, sans-serif">60</text><line x1="487" y1="770.3" x2="1900" y2="770.3" stroke="#e0e3ea" stroke-width="1"/><text x="479" y="773.3" font-size="13" fill="#666" text-anchor="end" font-family="Liberation Sans, sans-serif">80</text><line x1="487" y1="740.5" x2="1900" y2="740.5" stroke="#e0e3ea" stroke-width="1"/><text x="479" y="743.5" font-size="13" fill="#666" text-anchor="end" font-family="Liberation Sans, sans-serif">100</text><text x="534.1" y="906" font-size="13" fill="#666" text-anchor="middle" font-family="Liberation Sans, sans-serif">2023-09-05</text><text x="628.3" y="906" font-size="13" fill="#666" text-anchor="middle" font-family="Liberation Sans, sans-serif">2023-09-06</text><text x="722.5" y="906" font-size="13" fill="#666" text-anchor="middle" font-family="Liberation Sans, sans-serif">2023-09-07</text><text x="816.7" y="906" font-size="13" fill="#666" text-anchor="middle" font-family="Liberation Sans, sans-serif">2023-09-08</text><text x="910.9" y="906" font-size="13" fill="#666" text-anchor="middle" font-family="Liberation Sans, sans-serif">2023-09-09</text><text x="1005.1" y="906" font-size="13" fill="#666" text-anchor="middle" font-family="Liberation Sans, sans-serif">2023-09-10</text><text x="1099.3" y="906" font-size="13" fill="#666" text-anchor="middle" font-family="Liberation Sans, sans-serif">2023-09-11</text><text x="1193.5" y="906" font-size="13" fill="#666" text-anchor="middle" font-family="Liberation Sans, sans-serif">2023-09-12</text><text x="1287.7" y="906" font-size="13" fill="#666" text-anchor="middle" font-family="Liberation Sans, sans-serif">2023-09-13</text><text x="1381.9" y="906" font-size="13" fill="#666" text-anchor="middle" font-family="Liberation Sans, sans-serif">2023-09-14</text><text x="1476.1" y="906" font-size="13" fill="#666" text-anchor="middle" font-family="Liberation Sans, sans-serif">2023-09-15</text><text x="1570.3" y="906" font-size="13" fill="#666" text-anchor="middle" font-family="Liberation Sans, sans-serif">2023-09-16</text><text x="1664.5" y="906" font-size="13" fill="#666" text-anchor="middle" font-family="Liberation Sans, sans-serif">2023-09-17</text><text x="1758.7" y="906" font-size="13" fill="#666" text-anchor="middle" font-family="Liberation Sans, sans-serif">2023-09-18</text><text x="1852.9" y="906" font-size="13" fill="#666" text-anchor="middle" font-family="Liberation Sans, sans-serif">2023-09-19</text><path d="M534.10 889.40C534.10 889.40 569.07 759.56 628.30 759.56C663.27 759.56 676.14 760.67 722.50 769.54C770.34 778.68 768.73 795.59 816.70 795.59C862.93 795.59 863.80 795.59 910.90 795.59C958.00 795.59 958.05 795.59 1005.10 796.34C1052.25 797.08 1052.15 802.29 1099.30 802.29C1146.35 802.29 1146.41 802.29 1193.50 801.55C1240.61 800.80 1241.15 801.55 1287.70 798.57C1335.35 795.52 1334.30 784.57 1381.90 777.72C1428.50 771.02 1428.94 771.02 1476.10 771.02C1523.14 771.02 1523.22 771.02 1570.30 771.02C1617.42 771.02 1617.49 767.30 1664.50 767.30C1711.69 767.30 1711.54 776.24 1758.70 776.24C1805.74 776.24 1852.90 770.28 1852.90 770.28L1852.90 889.4L534.10 889.4Z" fill="url(#ar)"/><path d="M534.10 889.40C534.10 889.40 569.07 759.56 628.30 759.56C663.27 759.56 676.14 760.67 722.50 769.54C770.34 778.68 768.73 795.59 816.70 795.59C862.93 795.59 863.80 795.59 910.90 795.59C958.00 795.59 958.05 795.59 1005.10 796.34C1052.25 797.08 1052.15 802.29 1099.30 802.29C1146.35 802.29 1146.41 802.29 1193.50 801.55C1240.61 800.80 1241.15 801.55 1287.70 798.57C1335.35 795.52 1334.30 784.57 1381.90 777.72C1428.50 771.02 1428.94 771.02 1476.10 771.02C1523.14 771.02 1523.22 771.02 1570.30 771.02C1617.42 771.02 1617.49 767.30 1664.50 767.30C1711.69 767.30 1711.54 776.24 1758.70 776.24C1805.74 776.24 1852.90 770.28 1852.90 770.28" fill="none" stroke="#4a8ef8" stroke-width="3" stroke-linecap="round" stroke-linejoin="round"/></svg>
</body></html>
